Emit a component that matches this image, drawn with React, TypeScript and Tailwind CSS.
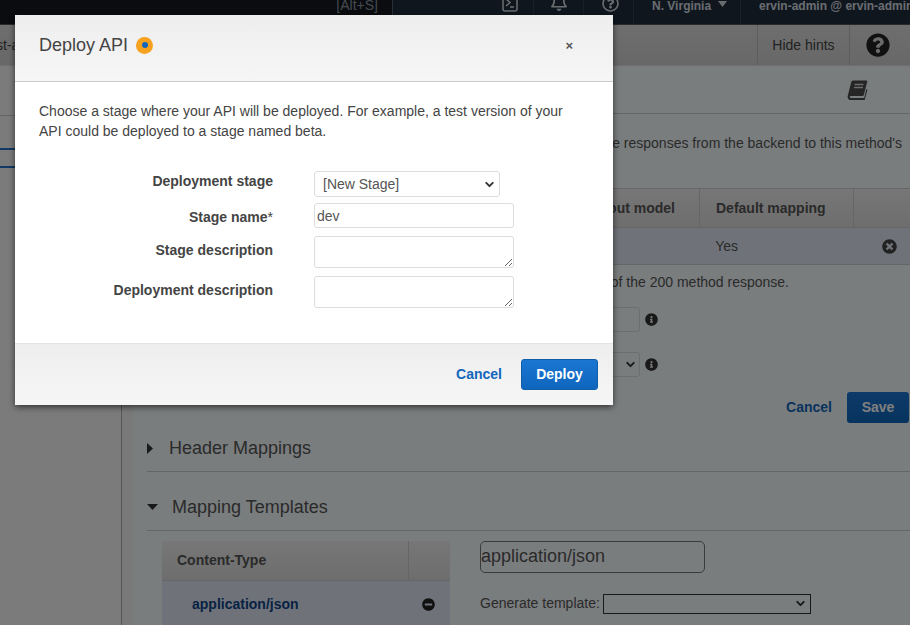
import { ChevronDown } from "lucide-react";
import { FaInfoCircle, FaMinusCircle, FaQuestionCircle, FaRegBell, FaRegQuestionCircle, FaTimesCircle } from "react-icons/fa";

const font = "font-['Liberation_Sans',Arial,sans-serif]";

const Caret = () => (
  <svg width="9" height="6" viewBox="0 0 9 6" className="fill-current">
    <path d="M0 0h9L4.5 6z" />
  </svg>
);

// slanted book, the one from the docs link
const BookIcon = () => (
  <svg width="21" height="20" viewBox="0 0 21 20">
    <path d="M6 0.5h13.5q1 0 .7 1.2L16.8 15q-.3 1-1.3 1H4q-1.6 0-1.2 1.2.3.8 1.4.8h13l2.2-9 1 1-2.6 9.5q-.2.9-1 .9H3.5Q.5 19.5.6 16.5L4.2 2.2Q4.6.5 6 .5z" fill="#4a4a4a" />
    <path d="M7.5 4.5h9M7 7.5h9" stroke="#d8d8d8" strokeWidth="1.4" />
  </svg>
);

function DeployModal() {
  return (
    <div className="absolute left-[15px] top-[15px] flex h-[390px] w-[598px] flex-col rounded-[3px] bg-white shadow-[0_2px_6px_rgba(0,0,0,0.6)]">
      <div className="flex h-[67px] shrink-0 items-center justify-between border-b border-[#cccccc] bg-gradient-to-b from-[#eeeeee] to-[#f6f6f6] pb-[6px] pl-[24px] pr-[40px]">
        <div className="flex items-center gap-[8px] text-[18px] text-[#444444]">
          Deploy API
          <span className="flex h-[17px] w-[17px] items-center justify-center rounded-full bg-[#f7a21e]">
            <span className="h-[6px] w-[6px] rounded-full bg-[#1166bb]" />
          </span>
        </div>
        <span className="text-[13px] font-bold leading-none text-[#555555]">×</span>
      </div>

      <div className="flex-1 px-[24px] pt-[19px] text-[14px] leading-[20px] text-[#444444]">
        <p>
          Choose a stage where your API will be deployed. For example, a test version of your
          <br />
          API could be deployed to a stage named beta.
        </p>
        <div className="mt-[30px] grid grid-cols-[234px_200px] items-start gap-x-[41px] text-[#444444]">
          <label className="h-[32px] text-right font-bold">Deployment stage</label>
          <div className="relative h-[26px] w-[186px]">
            <select className="h-full w-full appearance-none rounded-[3px] border border-[#dddddd] bg-white pl-[8px] text-[14px] text-[#555555]">
              <option>[New Stage]</option>
            </select>
            <ChevronDown size={13} strokeWidth={3.5} className="pointer-events-none absolute right-[4px] top-[7px] text-[#333333]" />
          </div>
          <label className="h-[33px] pt-[4px] text-right font-bold">
            Stage name<span className="font-normal">*</span>
          </label>
          <input defaultValue="dev" className="h-[25px] rounded-[3px] border border-[#dddddd] pl-[2px] text-[14px] text-[#555555]" />
          <label className="h-[40px] pt-[4px] text-right font-bold">Stage description</label>
          <textarea className="h-[32px] rounded-[3px] border border-[#dddddd]" />
          <label className="pt-[4px] text-right font-bold">Deployment description</label>
          <textarea className="h-[32px] rounded-[3px] border border-[#dddddd]" />
        </div>
      </div>

      <div className="flex h-[62px] shrink-0 items-center justify-end gap-[19px] border-t border-[#e3e3e3] bg-gradient-to-b from-[#eeeeee] to-[#f6f6f6] pr-[15px] text-[14px] font-bold">
        <span className="text-[#1166bb]">Cancel</span>
        <button className="h-[31px] w-[77px] rounded-[3px] border border-[#0f5ea8] bg-gradient-to-b from-[#1a76d2] to-[#0f66bd] font-bold text-white">
          Deploy
        </button>
      </div>
    </div>
  );
}

export default function App() {
  return (
    <div className={`relative h-[625px] w-[910px] overflow-hidden bg-[#f6f6f6] ${font}`}>
      {/* page under the dialog */}
      <div className="flex h-[25px] items-start overflow-hidden border-b border-[#555555] bg-[#1e2c3c] text-[#d5dbe1]">
        <div className="flex h-full w-[393px] shrink-0 justify-end border-r border-[#55606e] bg-[#14181f] pr-[14px]">
          <span className="mt-[-7px] text-[14px] leading-[24px] text-[#8a96a3]">[Alt+S]</span>
        </div>
        <div className="flex h-full w-[141px] shrink-0 justify-end border-r border-[#33414f] pr-[15px]">
          <svg width="16" height="19" viewBox="0 0 16 19" className="mt-[-7px] fill-none stroke-current stroke-[1.5]">
            <rect x="1" y="1" width="14" height="17" rx="2" />
            <path d="M4 6l4 3.5-4 3.5M8 14h4" />
          </svg>
        </div>
        <div className="flex h-full w-[50px] shrink-0 justify-center border-r border-[#33414f]">
          <FaRegBell size={18} className="mt-[-7px]" />
        </div>
        <div className="flex h-full w-[50px] shrink-0 justify-center border-r border-[#33414f] pl-[3px]">
          <FaRegQuestionCircle size={17} className="mt-[-5px]" />
        </div>
        <div className="flex h-full w-[107px] shrink-0 items-start gap-[7px] whitespace-nowrap border-r border-[#33414f] pl-[18px] text-[12px] font-bold">
          <span className="mt-[-3px]">N. Virginia</span>
          <span className="mt-[1px]"><Caret /></span>
        </div>
        <div className="mt-[-3px] whitespace-nowrap pl-[18px] text-[12px] font-bold">ervin-admin @ ervin-admin</div>
      </div>

      <div className="flex h-[41px] items-center justify-between border-b border-[#dddddd] bg-gradient-to-b from-[#dddddd] to-[#d0d0d0]">
        <span className="ml-[-4px] text-[14px] text-[#444444]">st-api</span>
        <div className="flex h-full items-center text-[14px] text-[#444444]">
          <div className="flex h-full w-[93px] items-center justify-center border-x border-[#bbbbbb]">Hide hints</div>
          <div className="flex h-full w-[60px] items-center justify-center pr-[5px]">
            <FaQuestionCircle size={24} className="text-[#222222]" />
          </div>
        </div>
      </div>

      <div className="flex h-[559px]">
        <div className="w-[122px] shrink-0 border-r border-[#aaaaaa] bg-[#f6f6f6]">
          <div className="h-[50px] border-b border-[#cccccc]" />
          <div className="mt-[32px] h-[20px] w-[60px] border-y-2 border-[#2272c8]" />
        </div>
        <div className="w-[11px] shrink-0 bg-[#f2f2f2]" />
        <div className="min-w-0 flex-1 bg-[#f4fafc] text-[#555555]">
          <div className="flex h-[48px] items-center justify-end border-b border-[#cccccc] pr-[42px]">
            <BookIcon />
          </div>
          <div className="ml-[14px] h-[74px] whitespace-nowrap pr-[8px] pt-[19px] text-right text-[14px]">
            the responses from the backend to this method's
          </div>
          <div className="ml-[14px] flex h-[40px] items-center justify-end border-y border-[#cccccc] bg-gradient-to-b from-[#eeeeee] to-[#dcdcdc] text-[14px] font-bold">
            <span className="mr-[24px]">out model</span>
            <div className="flex h-full w-[155px] items-center border-x border-[#cccccc] pl-[16px]">Default mapping</div>
            <div className="w-[56px]" />
          </div>
          <div className="ml-[14px] flex h-[37px] items-center justify-end border-b border-[#cccccc] bg-[#dfe7f2] text-[14px]">
            <span className="mr-[144px] mt-[1px]">Yes</span>
            <FaTimesCircle size={15} className="mr-[13px] text-[#444444]" />
          </div>
          <div className="ml-[14px] pr-[121px] pt-[7px] text-right text-[14px] leading-[20px]">of the 200 method response.</div>
          <div className="flex items-center justify-end gap-[4px] pr-[252px] pt-[15px]">
            <div className="h-[25px] w-[30px] rounded-r-[3px] border border-[#dddddd]" />
            <FaInfoCircle size={13} className="ml-[1px] text-[#333333]" />
          </div>
          <div className="flex items-center justify-end gap-[4px] pr-[252px] pt-[20px]">
            <div className="flex h-[25px] w-[30px] items-center justify-end rounded-r-[3px] border border-[#dddddd] pr-[2px]">
              <ChevronDown size={13} strokeWidth={3.5} className="text-[#333333]" />
            </div>
            <FaInfoCircle size={13} className="ml-[1px] text-[#333333]" />
          </div>
          <div className="flex items-center justify-end gap-[15px] pr-[1px] pt-[15px] text-[14px] font-bold">
            <span className="text-[#1166bb]">Cancel</span>
            <div className="flex h-[31px] w-[62px] items-center justify-center rounded-[3px] bg-gradient-to-b from-[#1a76d2] to-[#0f66bd] text-white">Save</div>
          </div>

          <div className="ml-[14px] mt-[2px] flex h-[47px] items-center gap-[16px] border-b border-[#cccccc] text-[18px] text-[#555555]">
            <svg width="6" height="11" viewBox="0 0 6 11" className="fill-[#333333]"><path d="M0 0l6 5.5L0 11z" /></svg>
            Header Mappings
          </div>
          <div className="ml-[14px] mt-[12px] flex h-[47px] items-center gap-[14px] border-b border-[#cccccc] text-[18px] text-[#555555]">
            <svg width="11" height="6" viewBox="0 0 11 6" className="fill-[#333333]"><path d="M0 0h11L5.5 6z" /></svg>
            Mapping Templates
          </div>

          <div className="ml-[29px] mt-[10px] flex gap-[30px]">
            <div className="w-[288px] text-[14px] font-bold">
              <div className="flex h-[40px] border-b border-[#cccccc] bg-gradient-to-b from-[#eeeeee] to-[#dcdcdc]">
                <div className="flex flex-1 items-center border-r border-[#cccccc] pl-[15px]">Content-Type</div>
                <div className="w-[41px]" />
              </div>
              <div className="flex h-[46px] items-center justify-between bg-[#dfe7f2] pl-[30px] pr-[15px] text-[#114488]">
                application/json
                <FaMinusCircle size={13} className="text-[#222222]" />
              </div>
            </div>
            <div className="text-[14px]">
              <div className="flex h-[32px] w-[225px] items-center rounded-[5px] border border-[#777777] pb-[2px] text-[18px] leading-none">application/json</div>
              <div className="mt-[20px] flex items-center gap-[3px]">
                Generate template:
                <div className="flex h-[20px] w-[208px] items-center justify-end border border-[#333333] pr-[3px]">
                  <ChevronDown size={13} strokeWidth={3.5} className="text-[#333333]" />
                </div>
              </div>
              <div className="ml-[37px] mt-[11px] h-[1px] w-[374px] bg-[#2272c8]" />
            </div>
          </div>
        </div>
      </div>

      {/* scrim + dialog */}
      <div className="absolute inset-0 bg-black/50" />
      <DeployModal />
    </div>
  );
}
